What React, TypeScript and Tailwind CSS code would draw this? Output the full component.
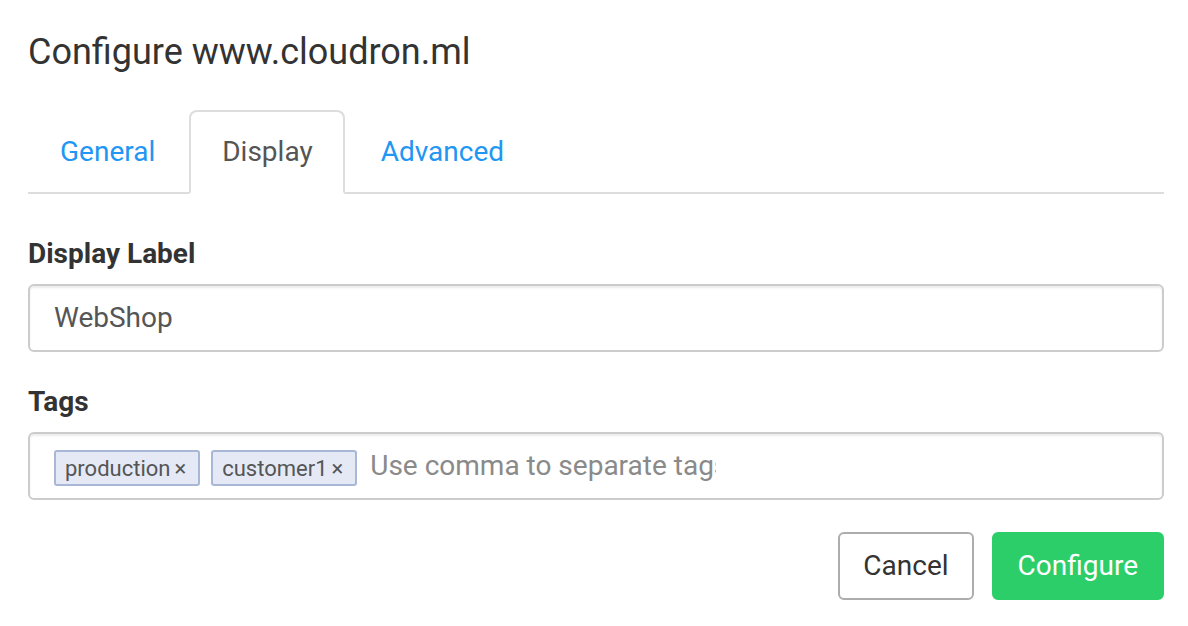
import React from "react";

const tabs = ["General", "Display", "Advanced"];

function Tag({ label }: { label: string }) {
  return (
    <span className="flex h-[36px] items-center rounded-[3px] border-2 border-[#a9b7d6] bg-[#e4e9f5] pl-[9px] pr-[12px] text-[22px] text-[#555]">
      {label}
      <span className="ml-[4px] text-[22px]">×</span>
    </span>
  );
}

export default function App() {
  return (
    <div className="h-[626px] w-[1188px] bg-white pl-[28px] pr-[24px] pt-[30px] font-['Roboto',sans-serif] text-[#333]">
      <h1 className="text-[36px] leading-[44px] font-normal">Configure www.cloudron.ml</h1>

      <ul className="mt-[36px] flex gap-[2px] border-b-2 border-[#ddd]">
        {tabs.map((t) => {
          const active = t === "Display";
          return (
            <li key={t} className={active ? "-mb-[2px] mr-[2px]" : "-mb-[2px]"}>
              <span
                className={
                  active
                    ? "block rounded-t-[8px] border-2 border-[#ddd] border-b-white bg-white pl-[31px] pr-[30px] py-[20px] text-[28px] leading-[40px] text-[#555]"
                    : "block rounded-t-[8px] border-2 border-transparent px-[30px] py-[20px] text-[28px] leading-[40px] text-[#2196f3]"
                }
              >
                {t}
              </span>
            </li>
          );
        })}
      </ul>

      <div className="mt-[40px] flex flex-col">
        <label className="text-[28px] leading-[40px] font-bold">Display Label</label>
        <div className="mt-[10px] flex h-[68px] items-center rounded-[6px] border-2 border-[#ccc] px-[24px] text-[28px] text-[#555] shadow-[inset_0_2px_2px_rgba(0,0,0,0.075)]">
          WebShop
        </div>
      </div>

      <div className="mt-[30px] flex flex-col">
        <label className="text-[28px] leading-[40px] font-bold">Tags</label>
        <div className="mt-[10px] flex h-[68px] items-center overflow-hidden rounded-[6px] border-2 border-[#ccc] px-[24px] pt-[4px] shadow-[inset_0_2px_2px_rgba(0,0,0,0.075)]">
          <div className="flex gap-[11px]">
            <Tag label="production" />
            <Tag label="customer1" />
          </div>
          <input
            readOnly
            placeholder="Use comma to separate tags"
            className="-mt-[4px] ml-[13px] w-[346px] bg-transparent text-[28px] outline-none placeholder:text-[#8a8a8a]"
          />
        </div>
      </div>

      <div className="mt-[32px] flex justify-end gap-[18px]">
        <button className="h-[68px] rounded-[6px] border-2 border-[#adadad] bg-white px-[23px] text-[28px] text-[#333]">
          Cancel
        </button>
        <button className="h-[68px] rounded-[6px] border-2 border-[#2bce68] bg-[#2bce68] px-[24px] text-[28px] text-white">
          Configure
        </button>
      </div>
    </div>
  );
}
